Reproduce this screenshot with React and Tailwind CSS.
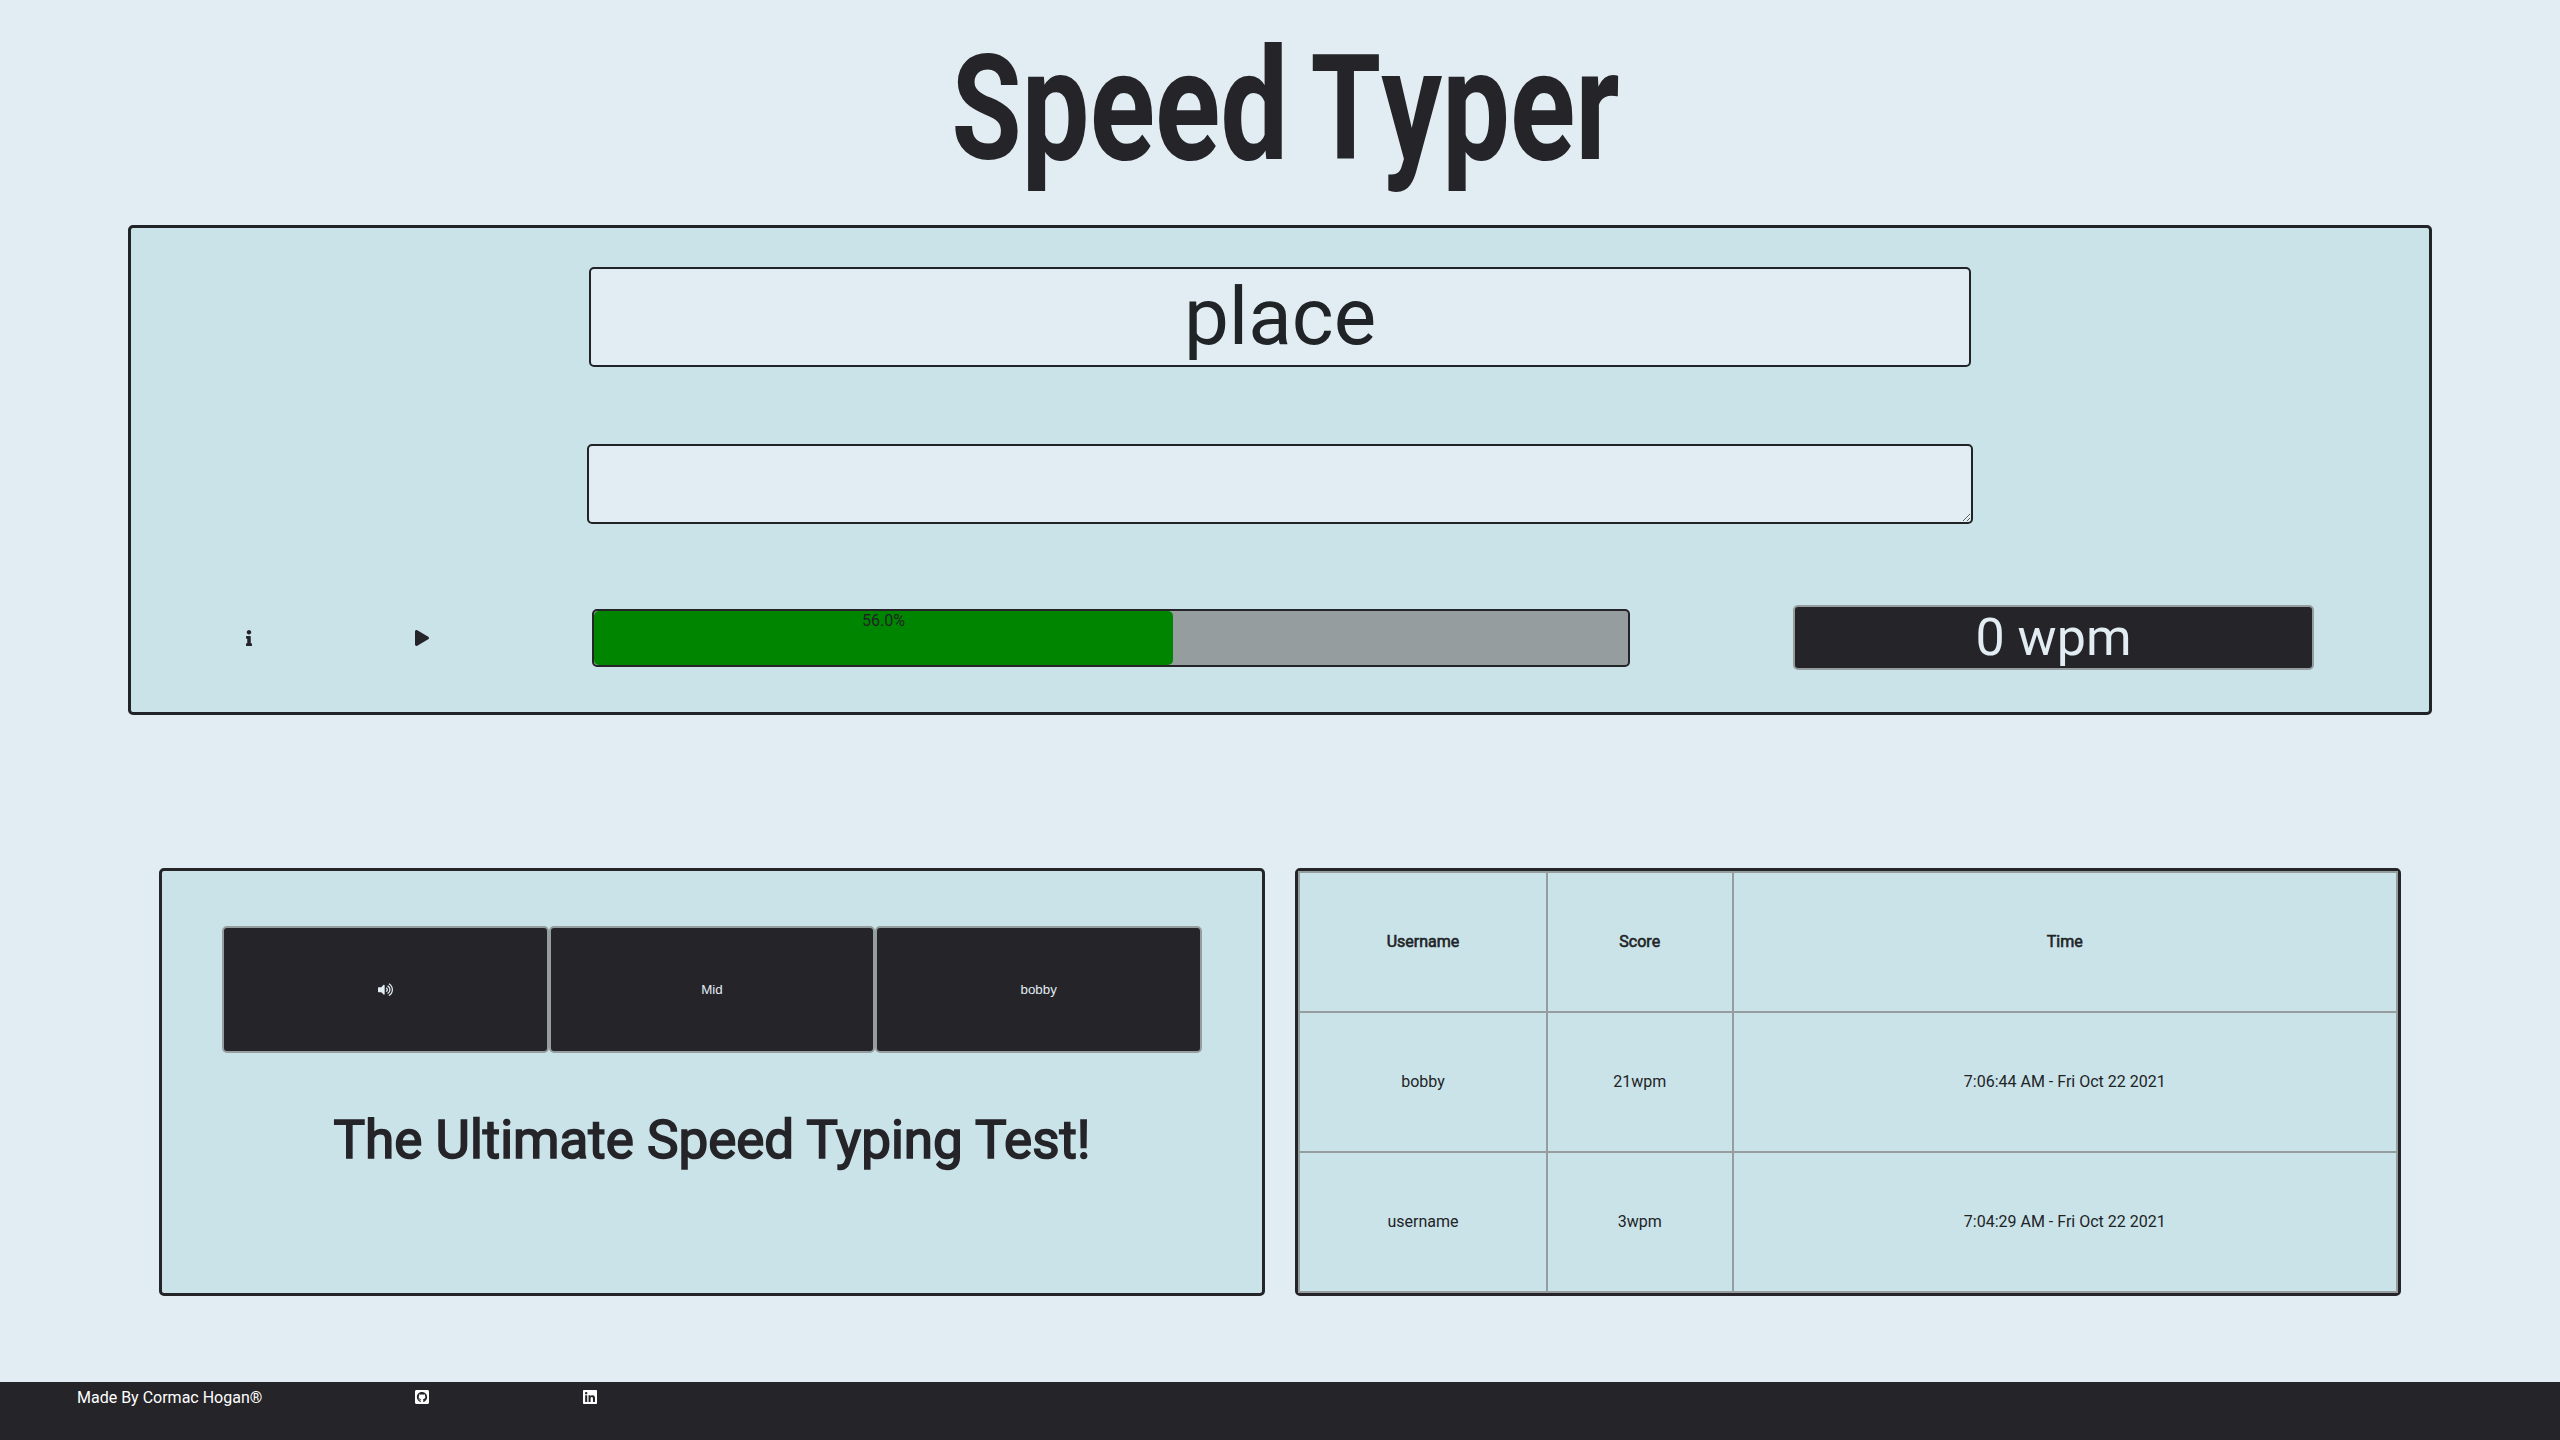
import { FaInfo, FaPlay, FaVolumeUp, FaGithubSquare, FaLinkedin } from "react-icons/fa";

const scores = [
  { name: "bobby", score: "21wpm", time: "7:06:44 AM - Fri Oct 22 2021" },
  { name: "username", score: "3wpm", time: "7:04:29 AM - Fri Oct 22 2021" },
];

function Title() {
  return (
    <h1 className="flex h-[225px] items-end justify-center gap-[33px] pb-[63px] pl-[13px] text-[146px] leading-none font-bold text-[#252429]">
      <span className="flex h-[104px] w-[325px] items-end justify-center">
        <span className="inline-block scale-x-[0.78] leading-[104px] whitespace-nowrap">
          S<span className="text-[155px]">peed</span>
        </span>
      </span>
      <span className="flex h-[104px] w-[301px] items-end justify-center">
        <span className="inline-block scale-x-[0.78] leading-[104px] whitespace-nowrap">
          T<span className="text-[155px]">yper</span>
        </span>
      </span>
    </h1>
  );
}

function Game() {
  return (
    <section className="mx-auto flex h-[490px] w-[2304px] flex-col items-center rounded-[5px] border-3 border-[#212427] bg-[#cae3e8]">
      <div className="mt-[39px] flex h-[100px] w-[1382px] shrink-0 items-center justify-center rounded-[5px] border-2 border-[#212427] bg-[#e1edf3] text-[80px] leading-none">
        place
      </div>
      <textarea className="mt-[77px] block h-[80px] w-[1386px] shrink-0 resize rounded-[5px] border-2 border-[#212427] bg-[#e1edf3] outline-none" />
      <div className="mt-[81px] flex h-[65px] w-full items-center">
        <div className="flex w-[461px] items-center">
          <FaInfo className="ml-[110px] h-4 w-4 text-[#252429]" />
          <FaPlay className="ml-[157px] h-4 w-4 text-[#252429]" />
        </div>
        <div className="h-[58px] w-[1038px] rounded-[5px] border-2 border-[#252429] bg-[#959d9f]">
          <div className="h-full w-[56%] rounded-[5px] bg-[#008500] text-center leading-[19px]">56.0%</div>
        </div>
        <div className="ml-[163px] flex h-[65px] w-[521px] items-center justify-center rounded-[5px] border-2 border-[#959d9f] bg-[#252429] text-[52px] leading-none text-[#e1edf3]">
          0 wpm
        </div>
      </div>
    </section>
  );
}

const optionClass =
  "flex h-[127px] flex-1 items-center justify-center rounded-[5px] border-2 border-[#959d9f] bg-[#252429] font-['Liberation_Sans',sans-serif] text-[13.333px] leading-none text-[#e1edf3]";

function Options() {
  return (
    <section className="h-[428px] w-[1106px] rounded-[5px] border-3 border-[#252429] bg-[#cae3e8] pt-[55px]">
      <div className="mx-auto flex w-[980px]">
        <button className={optionClass}>
          <FaVolumeUp className="h-[13.333px] w-[15px]" />
        </button>
        <button className={optionClass}>Mid</button>
        <button className={optionClass}>bobby</button>
      </div>
      <h2 className="mt-[56px] text-center text-[53px] leading-[62px] text-[#252429] [-webkit-text-stroke:1.7px_#252429]">
        The Ultimate Speed Typing Test!
      </h2>
    </section>
  );
}

function Scores() {
  return (
    <section className="h-[428px] w-[1106px] rounded-[5px] border-3 border-[#252429] bg-[#cae3e8]">
      <div className="grid h-[422px] grid-cols-[246px_183.5px_1fr] grid-rows-3 gap-[2px] border-2 border-[#959d9f] bg-[#959d9f] text-center">
        {["Username", "Score", "Time"].map((label) => (
          <div
            key={label}
            className="flex items-center justify-center bg-[#cae3e8] [-webkit-text-stroke:0.6px_#212427]"
          >
            {label}
          </div>
        ))}
        {scores.flatMap((row) =>
          [row.name, row.score, row.time].map((cell) => (
            <div key={row.name + cell} className="flex items-center justify-center bg-[#cae3e8]">
              {cell}
            </div>
          ))
        )}
      </div>
    </section>
  );
}

export default function App() {
  return (
    <div className="flex h-[1440px] w-[2560px] flex-col overflow-hidden bg-[#e1edf3] font-[Roboto,sans-serif] text-base text-[#212427]">
      <Title />
      <Game />
      <div className="mt-[153px] flex justify-center gap-[30px]">
        <Options />
        <Scores />
      </div>
      <footer className="mt-auto flex h-[58px] items-start bg-[#252429] pt-[6px] pl-[77px] leading-[19px] text-white">
        <span className="w-[338px]">Made By Cormac Hogan®</span>
        <FaGithubSquare className="mt-[1px] h-4 w-[14px]" />
        <FaLinkedin className="mt-[1px] ml-[154px] h-4 w-[14px]" />
      </footer>
    </div>
  );
}
